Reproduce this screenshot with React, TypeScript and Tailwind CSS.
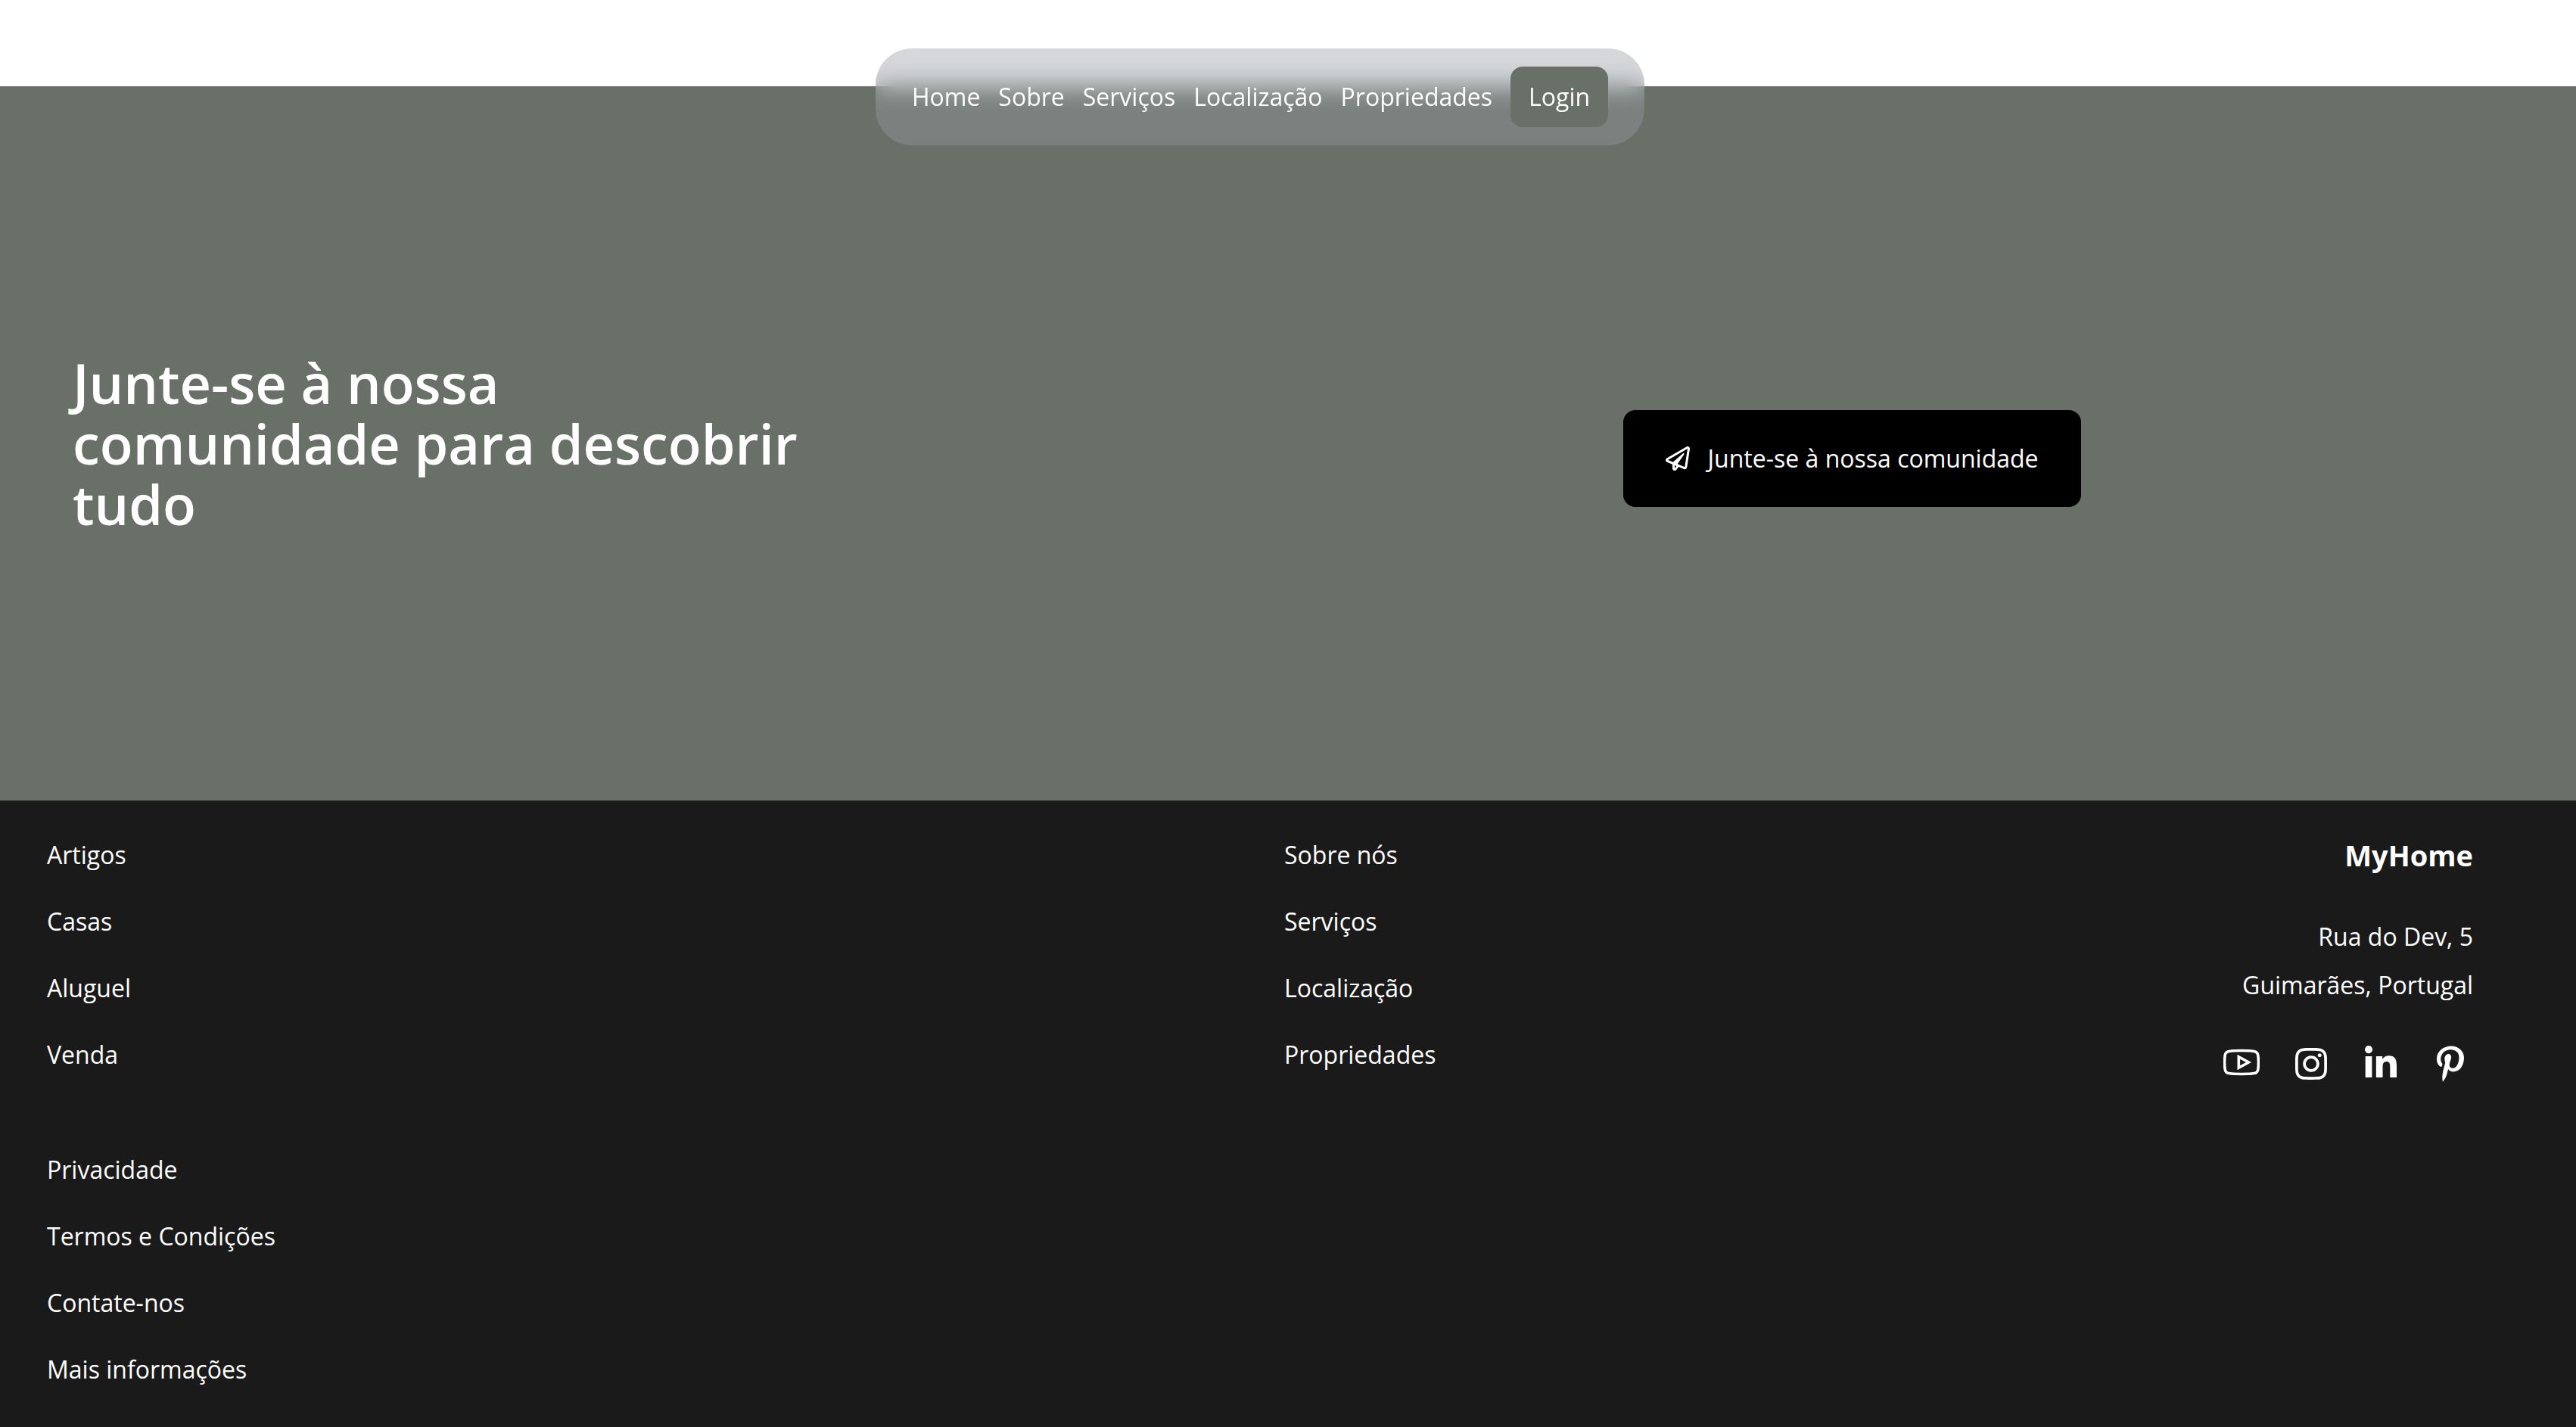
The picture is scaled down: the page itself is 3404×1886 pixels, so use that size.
import React from "react";
import { FaInstagram, FaLinkedinIn, FaPinterestP, FaRegPaperPlane } from "react-icons/fa";

const navLinks = ["Home", "Sobre", "Serviços", "Localização", "Propriedades"];
const articleLinks = ["Artigos", "Casas", "Aluguel", "Venda"];
const siteLinks = ["Sobre nós", "Serviços", "Localização", "Propriedades"];
const legalLinks = ["Privacidade", "Termos e Condições", "Contate-nos", "Mais informações"];

function YoutubeIcon() {
  return (
    <svg viewBox="0 0 48 48" className="size-12" fill="none" stroke="currentColor" aria-hidden="true">
      <path
        d="M24 6.5C31 6.5 37 6.8 40.5 7.4C43.8 8 45.4 9.5 45.8 12.6C46.4 17 46.4 27 45.8 31.4C45.4 34.5 43.8 36 40.5 36.6C37 37.2 31 37.5 24 37.5C17 37.5 11 37.2 7.5 36.6C4.2 36 2.6 34.5 2.2 31.4C1.6 27 1.6 17 2.2 12.6C2.6 9.5 4.2 8 7.5 7.4C11 6.8 17 6.5 24 6.5Z"
        strokeWidth="3.6"
      />
      <path d="M20.3 14.7V29.3L33.4 22Z" strokeWidth="3.6" strokeMiterlimit="10" />
    </svg>
  );
}

function LinkList({ links }: { links: string[] }) {
  return (
    <ul className="flex flex-col gap-12">
      {links.map((label) => (
        <li key={label}>
          <a href="#">{label}</a>
        </li>
      ))}
    </ul>
  );
}

function Navbar() {
  return (
    <header className="fixed inset-x-0 top-16 z-10 flex justify-center pr-[74px]">
      <nav className="flex items-center gap-6 rounded-[48px] bg-[#959aa2]/40 px-12 py-6 backdrop-blur-lg">
        {navLinks.map((label) => (
          <a key={label} href="#">
            {label}
          </a>
        ))}
        <button type="button" className="rounded-2xl bg-[#697067] px-6 py-5">
          Login
        </button>
      </nav>
    </header>
  );
}

export default function App() {
  return (
    <div className="flex min-h-screen flex-col bg-white pt-[114px] font-['Open_Sans',sans-serif] text-[32px] leading-10 text-white">
      <Navbar />

      <main className="flex min-h-[944px] items-center bg-[#697067]">
        <div className="w-[63%] pl-24">
          <h1 className="max-w-[1000px] text-7xl leading-20 font-semibold">
            Junte-se à nossa comunidade para descobrir tudo
          </h1>
        </div>
        <button type="button" className="mt-10 flex items-center gap-6 rounded-2xl bg-black px-14 py-11">
          <FaRegPaperPlane className="size-8" />
          Junte-se à nossa comunidade
        </button>
      </main>

      <footer className="grow bg-[#1a1a1a] pt-13 pr-34 pb-14 pl-[62px]">
        <div className="grid grid-cols-2 gap-x-16 gap-y-24">
          <LinkList links={articleLinks} />
          <div className="flex justify-between">
            <LinkList links={siteLinks} />
            <div className="flex flex-col items-end">
              <h2 className="text-[38px] font-bold">MyHome</h2>
              <address className="mt-14 text-right leading-16 not-italic">
                Rua do Dev, 5
                <br />
                Guimarães, Portugal
              </address>
              <div className="mt-12 flex gap-11 pr-1.5">
                <a href="#" aria-label="YouTube">
                  <YoutubeIcon />
                </a>
                <a href="#" aria-label="Instagram">
                  <FaInstagram className="size-12" />
                </a>
                <a href="#" aria-label="LinkedIn">
                  <FaLinkedinIn className="size-12" />
                </a>
                <a href="#" aria-label="Pinterest">
                  <FaPinterestP className="size-12" />
                </a>
              </div>
            </div>
          </div>
          <LinkList links={legalLinks} />
        </div>
      </footer>
    </div>
  );
}
